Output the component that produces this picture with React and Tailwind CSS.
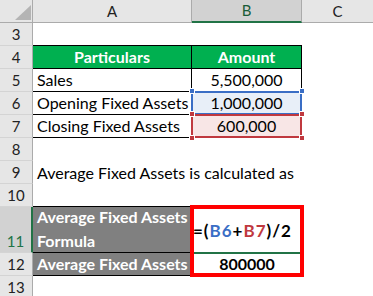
const RH = ({ n, cls = "", txt = "" }) => (
  <div className={`w-[33px] shrink-0 bg-[#e6e6e6] border-r border-r-[#ababab] border-b border-b-[#d4d4d4] flex items-end justify-center pb-[3px] text-[15px] text-[#222] ${cls}`}>
    <span className={txt}>{n}</span>
  </div>
);

function Handle({ pos, color }) {
  return <div className={`absolute w-[6px] h-[6px] border border-white ${color} ${pos}`} />;
}

export default function App() {
  return (
    <div className="w-[373px] h-[296px] overflow-hidden bg-white font-['Lato',sans-serif] text-[16px] leading-none text-black">
      {/* column header */}
      <div className="flex h-[23px]">
        <div className="w-[33px] shrink-0 bg-[#e6e6e6] border-r border-b border-[#ababab] relative">
          <svg className="absolute left-[15px] top-[5px]" width="16" height="15" viewBox="0 0 16 15">
            <polygon points="16,0 16,15 0,15" fill="#b4b4b4" />
          </svg>
        </div>
        <div className="w-[159px] shrink-0 bg-[#e6e6e6] border-r border-b border-[#ababab] flex items-end justify-center pb-[3px] text-[15px] text-[#222]">A</div>
        <div className="w-[110px] shrink-0 bg-[#d2d2d2] border-r border-r-[#ababab] border-b-2 border-b-[#217346] flex items-end justify-center pb-[3px] text-[15px] text-[#185c37]">B</div>
        <div className="flex-1 bg-[#e6e6e6] border-b border-[#ababab] flex items-end justify-center pb-[3px] text-[15px] text-[#222]">C</div>
      </div>

      {/* row 3 */}
      <div className="flex h-[23px]">
        <RH n="3" />
        <div className="w-[159px] shrink-0 border-b border-black" />
        <div className="w-[110px] shrink-0 border-b border-black" />
        <div className="flex-1" />
      </div>

      {/* row 4 */}
      <div className="flex h-[23px]">
        <RH n="4" />
        <div className="w-[159px] shrink-0 bg-[#00b050] border-r border-b border-black flex items-end justify-center pb-[3px] text-white font-bold">Particulars</div>
        <div className="w-[110px] shrink-0 bg-[#00b050] border-r border-b border-black flex items-end justify-center pb-[3px] text-white font-bold">Amount</div>
        <div className="flex-1" />
      </div>

      {/* row 5 */}
      <div className="flex h-[23px]">
        <RH n="5" />
        <div className="w-[159px] shrink-0 border-r border-b border-black flex items-end pl-[4px] pb-[3px]">Sales</div>
        <div className="w-[110px] shrink-0 border-r border-b border-black flex items-end justify-center pb-[3px]">5,500,000</div>
        <div className="flex-1" />
      </div>

      {/* row 6 */}
      <div className="flex h-[23px]">
        <RH n="6" />
        <div className="w-[159px] shrink-0 border-r border-b border-black flex items-end pl-[4px] pb-[3px] whitespace-nowrap">Opening Fixed Assets</div>
        <div className="w-[110px] shrink-0 border-r border-b border-black relative bg-[#e8eff8] flex items-end justify-center pb-[3px]">
          1,000,000
          <div className="absolute -left-px -top-px w-[111px] h-[24px] border-2 border-[#3a6ec5] pointer-events-none" />
          <Handle pos="-left-[3px] -top-[4px]" color="bg-[#3a6ec5]" />
          <Handle pos="-right-[4px] -top-[4px]" color="bg-[#3a6ec5]" />
        </div>
        <div className="flex-1" />
      </div>

      {/* row 7 */}
      <div className="flex h-[23px]">
        <RH n="7" />
        <div className="w-[159px] shrink-0 border-r border-b border-black flex items-end pl-[4px] pb-[3px] whitespace-nowrap">Closing Fixed Assets</div>
        <div className="w-[110px] shrink-0 border-r border-b border-black relative bg-[#f8e6e6] flex items-end justify-center pb-[3px]">
          600,000
          <div className="absolute -left-px -top-px w-[111px] h-[24px] border-2 border-[#c0393f] pointer-events-none" />
          <Handle pos="-left-[3px] -top-[4px]" color="bg-[#c0393f]" />
          <Handle pos="-right-[4px] -top-[4px]" color="bg-[#c0393f]" />
          <Handle pos="-left-[3px] -bottom-[4px]" color="bg-[#c0393f]" />
          <Handle pos="-right-[4px] -bottom-[4px]" color="bg-[#c0393f]" />
        </div>
        <div className="flex-1" />
      </div>

      {/* row 8 */}
      <div className="flex h-[23px]">
        <RH n="8" />
        <div className="flex-1" />
      </div>

      {/* row 9 */}
      <div className="flex h-[23px]">
        <RH n="9" />
        <div className="flex-1 flex items-end pl-[4px] pb-[3px] whitespace-nowrap">Average Fixed Assets is calculated as</div>
      </div>

      {/* row 10 */}
      <div className="flex h-[23px]">
        <RH n="10" />
        <div className="w-[159px] shrink-0 border-b border-black" />
        <div className="w-[110px] shrink-0 border-b border-black" />
        <div className="flex-1" />
      </div>

      {/* row 11 */}
      <div className="flex h-[46px]">
        <div className="w-[33px] shrink-0 bg-[#d2d2d2] border-r-2 border-r-[#217346] border-b border-b-[#d4d4d4] flex items-end justify-center pb-[3px] text-[15px] text-[#217346]">11</div>
        <div className="w-[159px] shrink-0 bg-[#808080] border-r border-b border-black flex flex-col justify-end pl-[4px] pb-[3px] text-white font-bold leading-[24px] whitespace-nowrap">
          <span>Average Fixed Assets</span>
          <span className="-mb-[4px]">Formula</span>
        </div>
        <div className="w-[110px] shrink-0 border-r border-b border-black relative flex items-center pl-[1px] font-bold">
          <span className="mt-[2px] tracking-[1px] text-[17px]">
            =(<span className="text-[#3a6ec5]">B6</span>+<span className="text-[#c0393f]">B7</span>)/2
          </span>
          <div className="absolute left-0 right-0 -bottom-[2px] h-[2px] bg-[#217346]" />
          <div className="absolute -right-[3px] -bottom-[3px] w-[4px] h-[4px] bg-[#217346]" />
          <div className="absolute -left-[2px] -top-[2px] w-[114px] h-[72px] border-4 border-[#ff0000] pointer-events-none" />
        </div>
        <div className="flex-1" />
      </div>

      {/* row 12 */}
      <div className="flex h-[23px]">
        <RH n="12" />
        <div className="w-[159px] shrink-0 bg-[#808080] border-r border-b border-black flex items-end pl-[4px] pb-[3px] text-white font-bold whitespace-nowrap">Average Fixed Assets</div>
        <div className="w-[110px] shrink-0 border-b border-black flex items-end justify-center pb-[3px] font-bold">800000</div>
        <div className="flex-1" />
      </div>

      {/* row 13 */}
      <div className="flex h-[23px]">
        <RH n="13" />
        <div className="flex-1" />
      </div>
    </div>
  );
}
